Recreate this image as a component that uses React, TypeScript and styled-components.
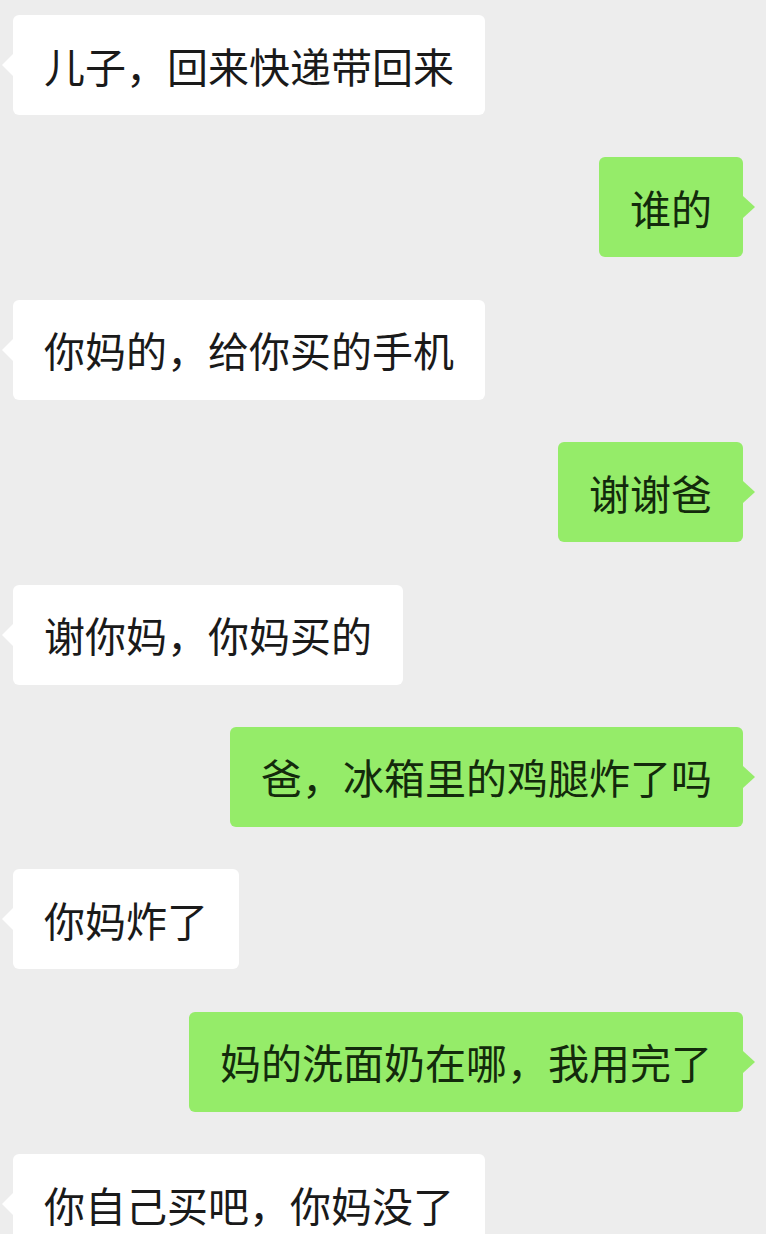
import * as React from 'react';
import styled, { createGlobalStyle, css } from 'styled-components';

const GlobalStyle = createGlobalStyle`
  html, body {
    margin: 0;
    padding: 0;
    background: #ededed;
  }
`;

const Chat = styled.div`
  width: 766px;
  height: 1234px;
  overflow: hidden;
  box-sizing: border-box;
  padding: 15px 23px 0 13px;
  display: flex;
  flex-direction: column;
  gap: 42.4px;
  background: #ededed;
  font-family: 'Noto Sans CJK SC', 'Noto Sans', sans-serif;
`;

const Row = styled.div<{ $mine?: boolean }>`
  display: flex;
  justify-content: ${(p) => (p.$mine ? 'flex-end' : 'flex-start')};
`;

const Bubble = styled.div<{ $mine?: boolean }>`
  position: relative;
  box-sizing: border-box;
  height: 100px;
  padding: 0 31px;
  display: flex;
  align-items: center;
  border-radius: 6px;
  font-size: 41px;
  line-height: 1;
  white-space: nowrap;
  color: ${(p) => (p.$mine ? '#132a0c' : '#1a1a1a')};
  background: ${(p) => (p.$mine ? '#95ec69' : '#ffffff')};

  /* little tail pointing at the sender */
  &::before {
    content: '';
    position: absolute;
    top: 50%;
    margin-top: -11px;
    border: 11px solid transparent;
    ${(p) =>
      p.$mine
        ? css`
            right: -12px;
            border-left: 12px solid #95ec69;
            border-right-width: 0;
          `
        : css`
            left: -11px;
            border-right: 11px solid #ffffff;
            border-left-width: 0;
          `}
  }
`;

const messages = [
  { mine: false, text: '儿子，回来快递带回来' },
  { mine: true, text: '谁的' },
  { mine: false, text: '你妈的，给你买的手机' },
  { mine: true, text: '谢谢爸' },
  { mine: false, text: '谢你妈，你妈买的' },
  { mine: true, text: '爸，冰箱里的鸡腿炸了吗' },
  { mine: false, text: '你妈炸了' },
  { mine: true, text: '妈的洗面奶在哪，我用完了' },
  { mine: false, text: '你自己买吧，你妈没了' },
];

export default function App() {
  return (
    <>
      <GlobalStyle />
      <Chat>
        {messages.map((m, i) => (
          <Row key={i} $mine={m.mine}>
            <Bubble $mine={m.mine}>{m.text}</Bubble>
          </Row>
        ))}
      </Chat>
    </>
  );
}
